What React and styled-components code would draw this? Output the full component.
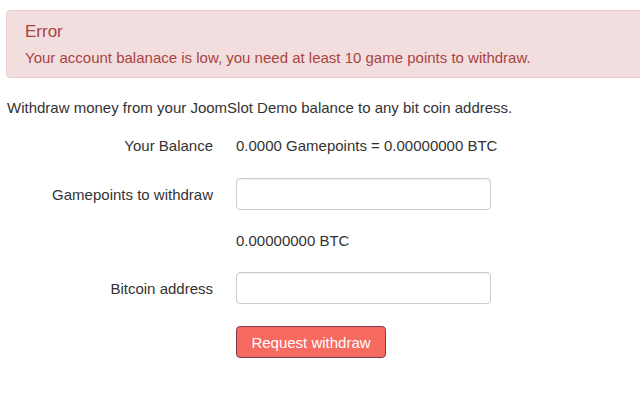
import React from "react";
import styled, { createGlobalStyle } from "styled-components";

const GlobalStyle = createGlobalStyle`
  body {
    margin: 0;
    background: #fff;
    font-family: "Liberation Sans", Arial, sans-serif;
    color: #333;
  }
`;

const Page = styled.div`
  width: 640px;
  height: 406px;
  overflow: hidden;
  padding-top: 10px;
  box-sizing: border-box;
`;

const Alert = styled.div`
  margin-left: 6px;
  width: 660px;
  height: 68px;
  box-sizing: border-box;
  padding: 11px 18px;
  background: #f2dede;
  border: 1px solid #ebccd1;
  border-radius: 4px;
  color: #a94442;
`;

const AlertTitle = styled.div`
  font-size: 17px;
  line-height: 20px;
`;

const AlertText = styled.div`
  font-size: 15px;
  line-height: 20px;
  margin-top: 6px;
`;

const Intro = styled.p`
  margin: 20px 0 0 7px;
  font-size: 15px;
  line-height: 20px;
`;

const Form = styled.div`
  display: flex;
  flex-direction: column;
  margin-top: 15px;
`;

const Row = styled.div`
  display: flex;
  align-items: center;
  height: ${(p) => p.$h}px;
  margin-bottom: ${(p) => p.$mb || 0}px;
`;

const Label = styled.div`
  width: 213px;
  text-align: right;
  font-size: 15px;
  padding-right: 23px;
  box-sizing: content-box;
`;

const Value = styled.div`
  font-size: 15px;
`;

const Input = styled.input`
  width: 255px;
  height: 32px;
  box-sizing: border-box;
  border: 1px solid #ccc;
  border-radius: 4px;
  box-shadow: inset 0 1px 1px rgba(0, 0, 0, 0.075);
  padding: 6px 12px;
  font-size: 15px;
  font-family: inherit;
`;

const Button = styled.button`
  width: 150px;
  height: 32px;
  background: #f66a5f;
  border: 1px solid #7a3c55;
  border-radius: 4px;
  color: #fff;
  font-size: 15px;
  font-family: inherit;
  padding: 0;
`;

export default function App() {
  return (
    <Page>
      <GlobalStyle />
      <Alert>
        <AlertTitle>Error</AlertTitle>
        <AlertText>
          Your account balanace is low, you need at least 10 game points to withdraw.
        </AlertText>
      </Alert>
      <Intro>Withdraw money from your JoomSlot Demo balance to any bit coin address.</Intro>
      <Form>
        <Row $h={24} $mb={21}>
          <Label>Your Balance</Label>
          <Value>0.0000 Gamepoints = 0.00000000 BTC</Value>
        </Row>
        <Row $h={32} $mb={18}>
          <Label>Gamepoints to withdraw</Label>
          <Input />
        </Row>
        <Row $h={24} $mb={20}>
          <Label />
          <Value>0.00000000 BTC</Value>
        </Row>
        <Row $h={32} $mb={22}>
          <Label>Bitcoin address</Label>
          <Input />
        </Row>
        <Row $h={32}>
          <Label />
          <Button>Request withdraw</Button>
        </Row>
      </Form>
    </Page>
  );
}
